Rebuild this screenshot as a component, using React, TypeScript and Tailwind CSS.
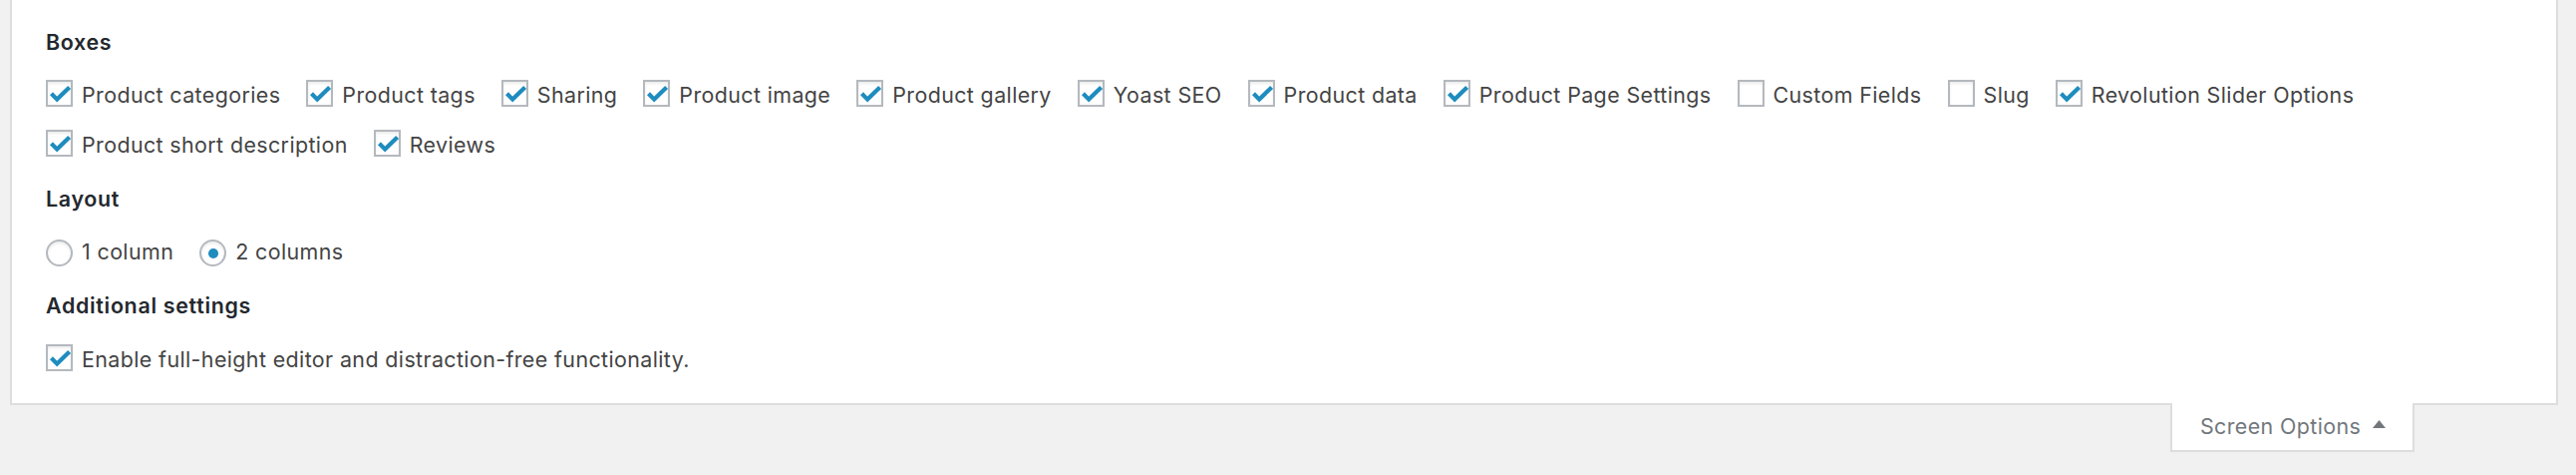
import React from "react"

const boxRows: readonly (readonly { label: string; checked: boolean }[])[] = [
  [
    { label: "Product categories", checked: true },
    { label: "Product tags", checked: true },
    { label: "Sharing", checked: true },
    { label: "Product image", checked: true },
    { label: "Product gallery", checked: true },
    { label: "Yoast SEO", checked: true },
    { label: "Product data", checked: true },
    { label: "Product Page Settings", checked: true },
    { label: "Custom Fields", checked: false },
    { label: "Slug", checked: false },
    { label: "Revolution Slider Options", checked: true },
  ],
  [
    { label: "Product short description", checked: true },
    { label: "Reviews", checked: true },
  ],
]

const layouts = [
  { label: "1 column", checked: false },
  { label: "2 columns", checked: true },
]

function CheckBox({ checked }: { checked: boolean }) {
  return (
    <span className="mb-[3px] mr-[9px] block h-[27px] w-[27px] shrink-0 border-2 border-[#b4b9be] bg-white shadow-[inset_0_2px_3px_rgba(0,0,0,0.08)]">
      {checked && (
        <svg viewBox="0 0 27 27" className="-m-[2px] block h-[27px] w-[27px]">
          <polyline points="5.5,13.8 11.2,19.6 23.6,7.4" fill="none" stroke="#1e8cbe" strokeWidth="4.2" strokeLinejoin="miter" />
        </svg>
      )}
    </span>
  )
}

function Radio({ checked }: { checked: boolean }) {
  return (
    <span className="mr-[9px] mt-[4px] flex h-[27px] w-[27px] shrink-0 items-center justify-center rounded-full border-2 border-[#b4b9be] bg-white shadow-[inset_0_2px_3px_rgba(0,0,0,0.08)]">
      {checked && <span className="block h-[10px] w-[10px] rounded-full bg-[#1e8cbe]" />}
    </span>
  )
}

function Heading({ children, className = "" }: { children: React.ReactNode; className?: string }) {
  return <h5 className={`flex h-[30px] items-center font-semibold tracking-[0.7px] text-[#23282d] ${className}`}>{children}</h5>
}

export default function App() {
  return (
    <div className="min-h-screen bg-[#f1f1f1] pl-[10px] pr-[18px] text-[21.4px] tracking-[0.4px] text-[#444444] [font-family:Inter,'Liberation_Sans',sans-serif]">
      <div className="border-x-2 border-b-2 border-[#dddddd] bg-white pb-[18.5px] pl-[34px] pt-[27.5px]">
        <Heading>Boxes</Heading>
        <div className="mt-[12.5px]">
          {boxRows.map((row, i) => (
            <div key={i} className="flex h-[50px] items-center gap-x-[26px]">
              {row.map((item) => (
                <label key={item.label} className="flex items-center whitespace-nowrap">
                  <CheckBox checked={item.checked} />
                  <span>{item.label}</span>
                </label>
              ))}
            </div>
          ))}
        </div>

        <Heading className="mt-[14.5px]">Layout</Heading>
        <div className="mt-[12.5px] flex h-[50px] items-center gap-x-[26px]">
          {layouts.map((item) => (
            <label key={item.label} className="flex items-center whitespace-nowrap">
              <Radio checked={item.checked} />
              <span>{item.label}</span>
            </label>
          ))}
        </div>

        <Heading className="mt-[14px]">Additional settings</Heading>
        <div className="mt-[14px] flex h-[50px] items-center">
          <label className="flex items-center whitespace-nowrap">
            <CheckBox checked />
            <span>Enable full-height editor and distraction-free functionality.</span>
          </label>
        </div>
      </div>

      <div className="flex justify-end pr-[144px]">
        <button className="-mt-[2px] flex h-[49.5px] w-[245px] items-center border-x-2 border-b-2 border-[#dddddd] bg-white pl-[28px] text-[#72777c]">
          <span>Screen Options</span>
          <svg viewBox="0 0 13 8" className="mb-[4px] ml-[12px] h-[8px] w-[13px]">
            <polygon points="0,8 6.5,0 13,8" fill="#72777c" />
          </svg>
        </button>
      </div>
    </div>
  )
}
